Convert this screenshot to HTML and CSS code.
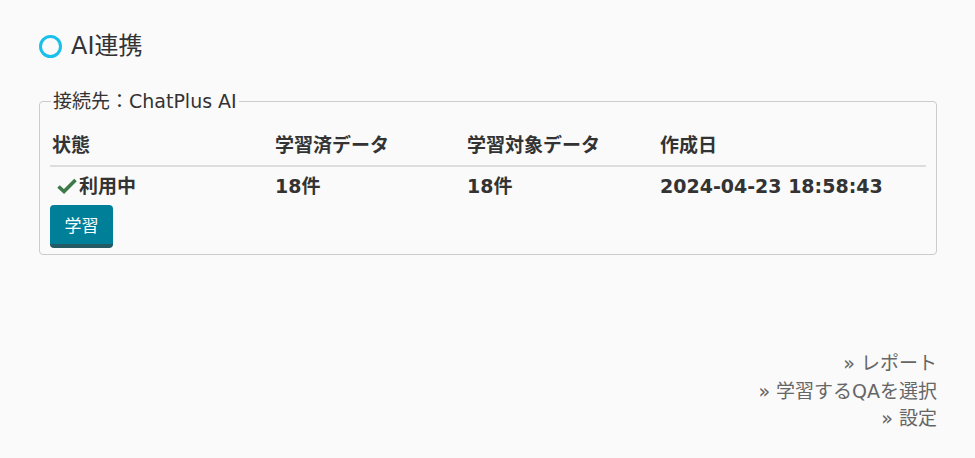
FILE: index.html
```html
<!DOCTYPE html>
<html lang="ja">
<head>
<meta charset="utf-8">
<link rel="stylesheet" href="styles.css">
</head>
<body>
<div class="page">
  <h1 class="title"><span class="ring"></span>AI連携</h1>
  <fieldset class="box">
    <legend class="legend">接続先：ChatPlus AI</legend>
    <table class="tbl">
      <thead>
        <tr>
          <th class="c1">状態</th>
          <th class="c2">学習済データ</th>
          <th class="c3">学習対象データ</th>
          <th class="c4">作成日</th>
        </tr>
      </thead>
      <tbody>
        <tr>
          <td><span class="check"><svg width="20" height="16" viewBox="0 0 20 16"><path d="M1.5 8.5 L7 13.5 L18.5 2" fill="none" stroke="#3d7a48" stroke-width="3.6"/></svg></span>利用中</td>
          <td>18件</td>
          <td>18件</td>
          <td>2024-04-23 18:58:43</td>
        </tr>
      </tbody>
    </table>
    <button class="btn">学習</button>
  </fieldset>
  <div class="links">
    <a class="link">» レポート</a>
    <a class="link">» 学習するQAを選択</a>
    <a class="link">» 設定</a>
  </div>
</div>
</body>
</html>
```
FILE: styles.css
```css
html, body { margin: 0; padding: 0; }
body {
  background: #fafafa;
  font-family: "DejaVu Sans", "Noto Sans CJK JP", sans-serif;
  color: #333;
}
.page { padding: 28px 38px 0 39px; }
.title {
  display: flex;
  align-items: center;
  margin: 0;
  font-size: 24px;
  font-weight: normal;
  line-height: 36px;
  color: #333;
}
.ring {
  width: 17px;
  height: 17px;
  border: 3px solid #18c0ea;
  border-radius: 50%;
  margin: 0 9px 0 0;
}
.box {
  margin: 23px 0 0 0;
  padding: 0 10px 6px 10px;
  border: 1px solid #ccc;
  border-radius: 4px;
}
.legend {
  padding: 0 2px;
  font-size: 19px;
  line-height: 28px;
  margin-left: 1px;
}
.tbl {
  width: 100%;
  border-collapse: collapse;
  margin-top: 9px;
  font-size: 19px;
}
.tbl th, .tbl td {
  text-align: left;
  font-weight: bold;
  padding: 0 0 0 2px;
  line-height: 26px;
}
.tbl th { height: 41px; vertical-align: middle; border-bottom: 2px solid #ddd; }
.tbl td { height: 38px; vertical-align: middle; }
.c1 { width: 221px; }
.c2 { width: 190px; }
.c3 { width: 191px; }
.check { display: inline-block; vertical-align: -1px; margin: 0 2px 0 5px; }
.btn {
  display: block;
  width: 63px;
  height: 43px;
  background: #007f99;
  color: #fff;
  border: none;
  border-bottom: 4px solid #235a63;
  border-radius: 4px;
  font-family: inherit;
  font-size: 17px;
  padding: 0;
}
.links {
  display: flex;
  flex-direction: column;
  align-items: flex-end;
  margin-top: 95px;
}
.link {
  color: #666;
  font-size: 19px;
  line-height: 27.5px;
}
```
